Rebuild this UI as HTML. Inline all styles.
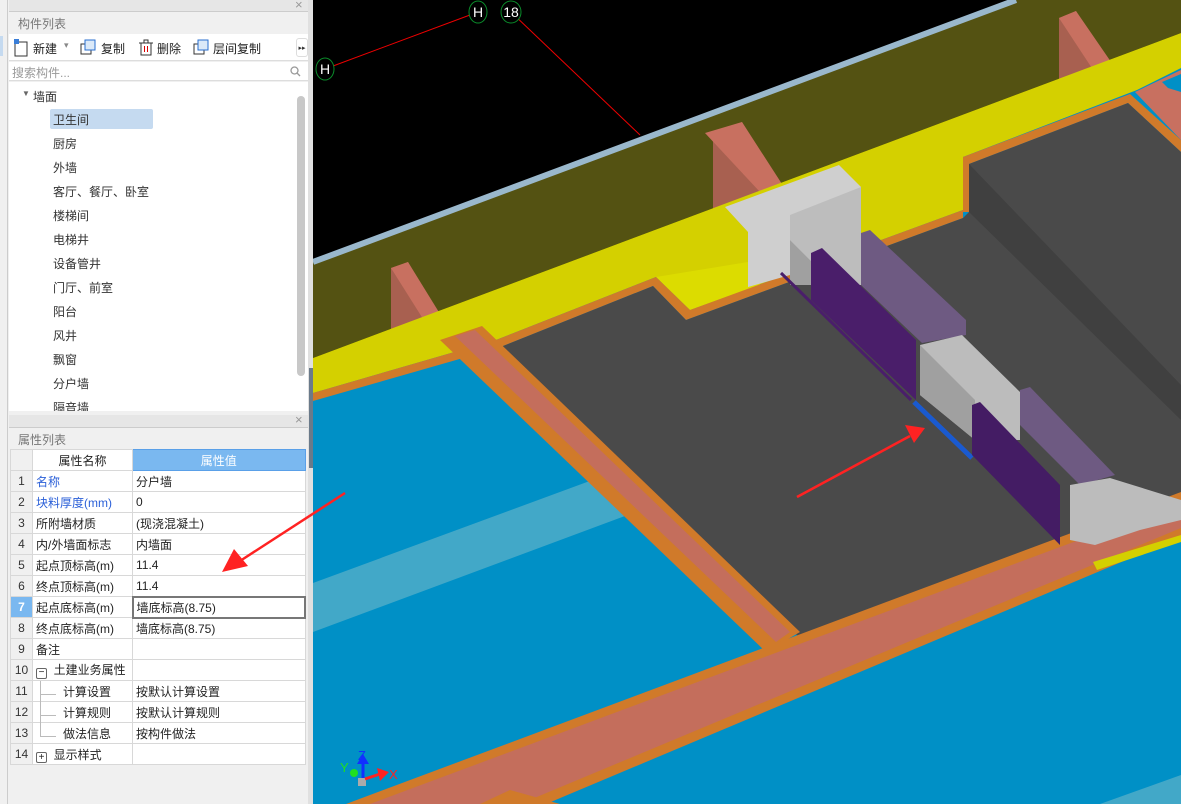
<!DOCTYPE html>
<html><head><meta charset="utf-8"><style>
*{margin:0;padding:0;box-sizing:border-box}
body{width:1181px;height:804px;overflow:hidden;background:#f0f0f0;font-family:"Liberation Sans","Noto Sans CJK SC",sans-serif;font-size:12px;color:#222;position:relative}
.abs{position:absolute}
.tree div{position:absolute;left:53px;font-size:12px;color:#333}
table{border-collapse:collapse;position:absolute;left:10px;top:449px;width:296px;font-size:12px}
td{border:1px solid #d8d8d8;height:21px;padding:0 3px;white-space:nowrap;background:#fff}
td.n{background:#f0f0f0;text-align:center;width:22px;padding:0;color:#333}
td.k{width:100px}
.blue{color:#2a5fd8}
</style></head><body>
<div class="abs" style="left:0;top:0;width:8px;height:804px;background:#f0f0f0;border-right:1px solid #ccc"></div>
<div class="abs" style="left:0;top:36px;width:3px;height:20px;background:#c5daf0"></div>
<div class="abs" style="left:9px;top:0;width:299px;height:12px;background:#e6e6e6;border-bottom:1px solid #ccc"></div>
<div class="abs" style="left:295px;top:-3px;color:#999;font-size:13px">×</div>
<div class="abs" style="left:9px;top:12px;width:299px;height:22px;background:#f0f0f0;color:#777;padding:3px 0 0 9px;font-size:12px">构件列表</div>
<div class="abs" style="left:9px;top:34px;width:299px;height:27px;background:#fff;border-bottom:1px solid #ddd"></div>
<svg class="abs" style="left:13px;top:38px" width="20" height="20"><rect x="2" y="4" width="12" height="14" fill="#fff" stroke="#333"/><rect x="1" y="1" width="5" height="5" fill="#3a7ed8"/></svg>
<div class="abs" style="left:33px;top:40px">新建</div><div class="abs" style="left:64px;top:40px;color:#888;font-size:9px">▾</div>
<svg class="abs" style="left:80px;top:39px" width="18" height="18"><rect x="1" y="5" width="10" height="10" fill="#fff" stroke="#333"/><rect x="5" y="1" width="10" height="10" fill="#dbe9f8" stroke="#2a6fcf"/></svg>
<div class="abs" style="left:101px;top:40px">复制</div>
<svg class="abs" style="left:138px;top:39px" width="16" height="18"><rect x="3" y="4" width="10" height="12" fill="#fff" stroke="#333"/><line x1="1" y1="4" x2="15" y2="4" stroke="#333"/><rect x="6" y="1" width="4" height="3" fill="none" stroke="#333"/><line x1="6.5" y1="7" x2="6.5" y2="13" stroke="#d00"/><line x1="9.5" y1="7" x2="9.5" y2="13" stroke="#d00"/></svg>
<div class="abs" style="left:157px;top:40px">删除</div>
<svg class="abs" style="left:193px;top:39px" width="18" height="18"><rect x="1" y="5" width="10" height="10" fill="#fff" stroke="#333"/><rect x="5" y="1" width="10" height="10" fill="#dbe9f8" stroke="#2a6fcf"/></svg>
<div class="abs" style="left:213px;top:40px">层间复制</div>
<div class="abs" style="left:296px;top:38px;width:12px;height:19px;border:1px solid #ddd;border-radius:3px;font-size:7px;color:#333;padding-top:5px;text-align:center">▸▸</div>
<div class="abs" style="left:9px;top:62px;width:299px;height:19px;background:#fff;border-bottom:1px solid #ddd;color:#999;padding:2px 0 0 3px">搜索构件...</div>
<svg class="abs" style="left:290px;top:66px" width="11" height="11"><circle cx="4.5" cy="4.5" r="3.5" fill="none" stroke="#999" stroke-width="1.3"/><line x1="7" y1="7" x2="10" y2="10" stroke="#999" stroke-width="1.3"/></svg>
<div class="abs tree" style="left:9px;top:82px;width:299px;height:329px;background:#fff;overflow:hidden">
<div style="left:13px;top:7px;font-size:8px;color:#666">▼</div>
<div style="left:24px;top:6px">墙面</div>
<div style="left:41px;top:27px;width:103px;height:20px;background:#c5daf0;border-radius:2px"></div>
<div style="left:44px;top:29px">卫生间</div>
<div style="left:44px;top:53px">厨房</div>
<div style="left:44px;top:77px">外墙</div>
<div style="left:44px;top:101px">客厅、餐厅、卧室</div>
<div style="left:44px;top:125px">楼梯间</div>
<div style="left:44px;top:149px">电梯井</div>
<div style="left:44px;top:173px">设备管井</div>
<div style="left:44px;top:197px">门厅、前室</div>
<div style="left:44px;top:221px">阳台</div>
<div style="left:44px;top:245px">风井</div>
<div style="left:44px;top:269px">飘窗</div>
<div style="left:44px;top:293px">分户墙</div>
<div style="left:44px;top:317px">隔音墙</div>
<div style="left:288px;top:14px;width:8px;height:280px;background:#c8c8c8;border-radius:4px"></div>
</div>
<div class="abs" style="left:9px;top:415px;width:299px;height:13px;background:#e6e6e6;border-bottom:1px solid #ccc"></div>
<div class="abs" style="left:295px;top:412px;color:#999;font-size:13px">×</div>
<div class="abs" style="left:9px;top:428px;width:299px;height:21px;color:#777;padding:3px 0 0 9px">属性列表</div>
<div class="abs" style="left:10px;top:449px;width:22px;height:355px;background:#f0f0f0"></div>
<table>
<tr><td class="n"></td><td class="k" style="text-align:center">属性名称</td><td style="background:#7ab8f0;color:#fff;text-align:center;border-color:#5aa0e8">属性值</td></tr>
<tr><td class="n">1</td><td class="blue">名称</td><td>分户墙</td></tr>
<tr><td class="n">2</td><td class="blue">块料厚度(mm)</td><td>0</td></tr>
<tr><td class="n">3</td><td>所附墙材质</td><td>(现浇混凝土)</td></tr>
<tr><td class="n">4</td><td>内/外墙面标志</td><td>内墙面</td></tr>
<tr><td class="n">5</td><td>起点顶标高(m)</td><td>11.4</td></tr>
<tr><td class="n">6</td><td>终点顶标高(m)</td><td>11.4</td></tr>
<tr><td class="n" style="background:#7ab8f0;color:#fff;font-weight:bold">7</td><td>起点底标高(m)</td><td style="border:2px solid #777">墙底标高(8.75)</td></tr>
<tr><td class="n">8</td><td>终点底标高(m)</td><td>墙底标高(8.75)</td></tr>
<tr><td class="n">9</td><td>备注</td><td></td></tr>
<tr><td class="n">10</td><td><span style="display:inline-block;width:11px;height:11px;border:1px solid #666;border-radius:2px;font-size:10px;line-height:8px;text-align:center;vertical-align:-1px">−</span>&nbsp; 土建业务属性</td><td></td></tr>
<tr><td class="n">11</td><td style="padding-left:30px">计算设置</td><td>按默认计算设置</td></tr>
<tr><td class="n">12</td><td style="padding-left:30px">计算规则</td><td>按默认计算规则</td></tr>
<tr><td class="n">13</td><td style="padding-left:30px">做法信息</td><td>按构件做法</td></tr>
<tr><td class="n">14</td><td><span style="display:inline-block;width:11px;height:11px;border:1px solid #666;border-radius:2px;font-size:10px;line-height:9px;text-align:center;vertical-align:-1px">+</span>&nbsp; 显示样式</td><td></td></tr>
</table>
<div class="abs" style="left:40px;top:681px;width:1px;height:56px;background:#bbb"></div>
<div class="abs" style="left:40px;top:694px;width:16px;height:1px;background:#bbb"></div>
<div class="abs" style="left:40px;top:715px;width:16px;height:1px;background:#bbb"></div>
<div class="abs" style="left:40px;top:736px;width:16px;height:1px;background:#bbb"></div>
<div class="abs" style="left:308px;top:0;width:5px;height:804px;background:#e0e0e0"></div>
<div class="abs" style="left:309px;top:368px;width:4px;height:100px;background:#6a7a8a"></div>
<svg class="abs" style="left:313px;top:0" width="868" height="804" viewBox="313 0 868 804">
<rect x="313" y="0" width="868" height="804" fill="#0090c6"/>
<polygon points="313,0 1181,0 1181,40 313,360" fill="#000"/>
<polygon points="313,262 1016,0 1181,0 1181,33 313,358" fill="#545212"/>
<line x1="313" y1="262" x2="1016" y2="0" stroke="#9ab8cc" stroke-width="6"/>
<!-- pillars -->
<polygon points="391,268 408,262 430,300 430,335 391,335" fill="#a86050"/>
<polygon points="391,268 408,262 445,322 430,330" fill="#c87060"/>
<polygon points="713,135 742,122 790,205 790,215 713,215" fill="#a86050"/>
<polygon points="705,133 742,122 800,212 786,220" fill="#c87060"/>
<polygon points="1059,18 1076,11 1100,55 1100,90 1059,88" fill="#a86050"/>
<polygon points="1059,18 1076,11 1120,75 1103,85" fill="#c87060"/>
<!-- yellow band -->
<polygon points="313,358 1181,33 1181,68 1137,90 963,157 963,210 690,310 656,277 496,340 313,393" fill="#d4d000"/>
<polygon points="656,277 690,310 760,285 748,262" fill="#dcdc00"/>
<polygon points="313,393 496,340 656,277 690,310 963,210 963,218 686,320 653,286 498,348 313,401" fill="#d07a2a"/>
<polygon points="963,157 1130,94 1181,140 1181,152 1128,103 969,164 969,212 963,212" fill="#d07a2a"/>
<polygon points="1135,92 1181,70 1181,140" fill="#c87060"/>
<polygon points="1162,82 1181,74 1181,92 1168,88" fill="#0090c6"/>
<!-- floor -->
<polygon points="498,348 653,286 686,320 963,218 969,212 969,164 1128,103 1181,152 1181,495 1070,540 800,638" fill="#4a4a4a"/>
<polygon points="969,164 1181,385 1181,420 969,212" fill="#404040"/>
<!-- light blue band -->
<polygon points="313,583 606,475 641,510 313,632" fill="#42a8c8"/>
<!-- diagonal beam -->
<polygon points="440,340 482,326 800,632 766,652" fill="#d07a2a"/>
<polygon points="455,336 475,330 790,632 776,642" fill="#c46e5c"/>
<!-- bottom beam -->
<polygon points="346,804 766,647 1181,492 1181,537 546,804" fill="#d07a2a"/>
<polygon points="370,804 770,655 1181,502 1181,528 520,804" fill="#c46e5c"/>
<polygon points="480,804 510,790 560,804" fill="#d07a2a"/>
<polygon points="1100,804 1181,775 1181,804" fill="#42a8c8"/>
<!-- gray column -->
<polygon points="725,207 839,165 861,187 861,285 790,285 790,275 748,287 748,232" fill="#cfcfcf"/>
<polygon points="790,215 861,187 861,285 835,285 790,240" fill="#bdbdbd"/>
<polygon points="790,240 835,285 790,285" fill="#a0a0a0"/>
<!-- purple walls -->
<line x1="781" y1="273" x2="911" y2="400" stroke="#4a1e6a" stroke-width="3"/>
<polygon points="811,253 822,248 916,340 916,400 811,300" fill="#4a1e6a"/>
<polygon points="861,233 870,230 966,320 966,335 922,343 861,285" fill="#6e5a82"/>
<polygon points="920,345 962,335 1020,392 1020,440 975,440 920,395" fill="#bcbcbc"/>
<polygon points="920,345 975,400 975,440 920,395" fill="#a0a0a0"/>
<line x1="914" y1="402" x2="972" y2="458" stroke="#1a5ad0" stroke-width="5"/>
<polygon points="972,405 980,402 1060,485 1060,545 972,455" fill="#441c64"/>
<polygon points="1020,390 1030,387 1115,475 1080,485 1020,425" fill="#6e5a82"/>
<polygon points="1070,485 1110,478 1181,500 1181,520 1140,530 1095,545 1070,540" fill="#bcbcbc"/>
<polygon points="1093,562 1181,535 1181,542 1097,570" fill="#d4d000"/>
<!-- labels -->
<line x1="325" y1="69" x2="478" y2="12" stroke="#e00" stroke-width="1"/>
<line x1="511" y1="12" x2="640" y2="135" stroke="#e00" stroke-width="1"/>
<g font-family="Liberation Sans" font-size="14" fill="#fff" text-anchor="middle">
<ellipse cx="325" cy="69" rx="9" ry="11" fill="#000" stroke="#0a8a2a"/><text x="325" y="74">H</text>
<ellipse cx="478" cy="12" rx="9" ry="11" fill="#000" stroke="#0a8a2a"/><text x="478" y="17">H</text>
<ellipse cx="511" cy="12" rx="10" ry="11" fill="#000" stroke="#0a8a2a"/><text x="511" y="17">18</text>
</g>
<rect x="358" y="778" width="8" height="8" fill="#aaa"/>
<line x1="363" y1="778" x2="363" y2="762" stroke="#1030ff" stroke-width="3"/><polygon points="357,764 369,764 363,754" fill="#1030ff"/>
<line x1="365" y1="779" x2="380" y2="774" stroke="#f22" stroke-width="3"/><polygon points="377,768 389,772 380,781" fill="#f22"/>
<circle cx="354" cy="773" r="4" fill="#20e020"/>
<text x="358" y="760" font-size="13" fill="#1030ff" font-family="Liberation Sans">Z</text>
<text x="340" y="772" font-size="13" fill="#20e020" font-family="Liberation Sans">Y</text>
<text x="389" y="779" font-size="13" fill="#f22" font-family="Liberation Sans">X</text>
</svg>
<!-- arrows overlay -->
<svg class="abs" style="left:0;top:0" width="1181" height="804">
<line x1="345" y1="493" x2="240" y2="561" stroke="#f22" stroke-width="2.5"/>
<polygon points="222,572 234,549 248,566" fill="#f22"/>
<line x1="797" y1="497" x2="910" y2="436" stroke="#f22" stroke-width="2.5"/>
<polygon points="925,428 905,425 914,443" fill="#f22"/>
</svg>
</body></html>
